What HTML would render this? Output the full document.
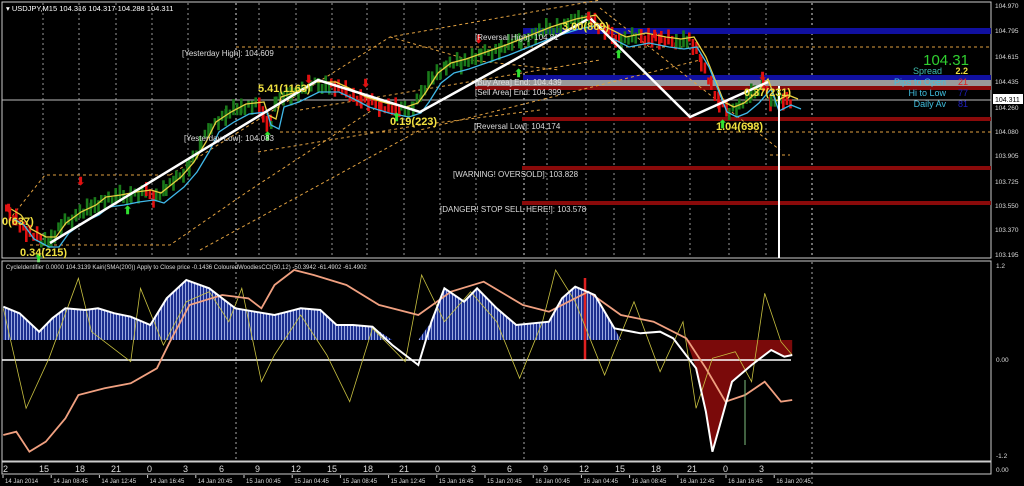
<!DOCTYPE html>
<html><head><meta charset="utf-8"><style>
html,body{margin:0;padding:0;background:#000;width:1024px;height:486px;overflow:hidden}
svg{display:block}
text{font-family:"Liberation Sans",sans-serif}
</style></head><body>
<svg id="s" width="1024" height="486" viewBox="0 0 1024 486">
<defs>
<pattern id="bl" width="3" height="10" patternUnits="userSpaceOnUse"><rect width="3" height="10" fill="#1c2f8f"/><rect x="2" width="1" height="10" fill="#9aa8e0"/></pattern>
</defs>
<rect width="1024" height="486" fill="#000"/>
<rect x="2" y="2" width="989" height="256" fill="none" stroke="#ccc" stroke-width="1"/>
<g id="grid" stroke="#aaa" stroke-dasharray="2,3" stroke-width="1"></g>
<rect x="523" y="28" width="468" height="6" fill="#1010a0"/>
<rect x="523" y="75" width="468" height="5" fill="#1010a0"/>
<rect x="475" y="80" width="516" height="6" fill="#9a9a9a"/>
<rect x="475" y="86" width="516" height="4" fill="#8a0a0a"/>
<line x1="2" y1="100" x2="991" y2="100" stroke="#bbb"/>
<rect x="522" y="117" width="469" height="4" fill="#8a0a0a"/>
<rect x="522" y="166" width="469" height="4" fill="#8a0a0a"/>
<rect x="522" y="201" width="469" height="4" fill="#8a0a0a"/>
<g stroke="#e0a040" stroke-dasharray="3,3" fill="none">
<line x1="236" y1="47" x2="991" y2="47"/><line x1="280" y1="132" x2="991" y2="132"/>
<polyline points="5,225 45,175 170,175"/><polyline points="30,245 170,245 250,190 380,105"/>
<polyline points="170,175 390,37 600,0"/><polyline points="300,110 600,60"/>
<polyline points="390,37 470,60 560,70"/><polyline points="200,250 420,130 700,60"/>
<polyline points="600,8 780,150"/><polyline points="258,152 420,125 540,110"/>
<line x1="770" y1="155" x2="790" y2="155"/>
</g>
<g id="candles"></g>
<polyline id="cy" fill="none" stroke="#e8d040" stroke-width="1.3"/>
<polyline id="cb" fill="none" stroke="#40b8e8" stroke-width="1.3"/>
<polyline points="50,243 318,80 350,90 420,112 590,18 690,117 768,82" fill="none" stroke="#fff" stroke-width="2.5"/>
<line x1="779" y1="86" x2="779" y2="258" stroke="#fff" stroke-width="2"/>
<g id="arr" font-size="11" font-weight="bold"></g>
<g font-size="8" fill="#ddd">
<text x="6" y="11" font-size="7.5" fill="#fff">▾ USDJPY,M15  104.316 104.317 104.288 104.311</text>
<text x="182" y="56">[Yesterday High]: 104.609</text>
<text x="184" y="141">[Yesterday Low]: 104.083</text>
<text x="475" y="40">[Reversal High]: 104.81</text>
<text x="475" y="85">[Buy Area] End: 104.439</text>
<text x="475" y="95">[Sell Area] End: 104.399</text>
<text x="474" y="129">[Reversal Low]: 104.174</text>
<text x="453" y="177">[WARNING! OVERSOLD]: 103.828</text>
<text x="440" y="212">[DANGER! STOP SELL HERE!]: 103.578</text>
</g>
<g font-size="11" font-weight="bold" fill="#f0e040">
<text x="2" y="225">0(637)</text><text x="20" y="256">0.34(215)</text>
<text x="258" y="92">5.41(1163)</text><text x="390" y="125">0.19(223)</text>
<text x="562" y="30">3.00(869)</text><text x="716" y="130">1.04(698)</text>
<text x="744" y="96">0.37(231)</text>
</g>
<g text-anchor="end">
<text x="969" y="65" font-size="15" fill="#30d030">104.31</text>
<text x="942" y="74" font-size="9" fill="#40c0b0">Spread</text><text x="968" y="74" font-size="9" fill="#f0e040" font-weight="bold">2.2</text>
<text x="946" y="85" font-size="9" fill="#40c0e0">Pips to Open</text><text x="968" y="85" font-size="9" fill="#e02020">21</text>
<text x="946" y="96" font-size="9" fill="#40c0e0">Hi to Low</text><text x="968" y="96" font-size="9" fill="#2020c0">77</text>
<text x="946" y="107" font-size="9" fill="#40c0e0">Daily Av</text><text x="968" y="107" font-size="9" fill="#2020c0">81</text>
</g>
<g font-size="6.5" fill="#ddd" id="pax"></g>
<rect x="993" y="94" width="30" height="10" fill="#fff"/><text x="995" y="102" font-size="7" fill="#000">104.311</text>
<rect x="2" y="261" width="989" height="200" fill="none" stroke="#ccc"/>
<line x1="236" y1="262" x2="236" y2="460" stroke="#aaa" stroke-dasharray="2,3"/>
<line x1="524" y1="262" x2="524" y2="460" stroke="#aaa" stroke-dasharray="2,3"/>
<line x1="812" y1="262" x2="812" y2="486" stroke="#aaa" stroke-dasharray="2,3"/>
<text x="6" y="269" font-size="6" fill="#ddd">CycleIdentifier 0.0000 104.3139  Kairi(SMA(200)) Apply to Close price -0.1436  ColouredWoodiesCCI(50,12) -50.3942 -61.4902 -61.4902</text>
<polygon id="hb" fill="url(#bl)"/>
<polygon id="hr" fill="#7a0a0a"/>
<line x1="585" y1="278" x2="585" y2="360" stroke="#e02020" stroke-width="2.5"/>
<line x1="2" y1="360" x2="791" y2="360" stroke="#fff" stroke-width="1.5"/>
<polyline id="iy" fill="none" stroke="#c8c040" stroke-width="0.8"/>
<polyline id="io" fill="none" stroke="#f0a080" stroke-width="1.8"/>
<polyline id="iw" fill="none" stroke="#fff" stroke-width="2"/>
<line x1="745" y1="380" x2="745" y2="445" stroke="#80c080" stroke-width="1"/>
<g font-size="6.5" fill="#ddd"><text x="996" y="268">1.2</text><text x="996" y="362">0.00</text><text x="996" y="458">-1.2</text><text x="996" y="472">0.00</text></g>
<rect x="2" y="462" width="989" height="12" fill="none" stroke="#ccc"/>
<g id="tax" font-size="9" fill="#ddd"></g>
<g id="dax" font-size="6" fill="#ddd"></g>
</svg>
<script>
var NS="http://www.w3.org/2000/svg";
function el(p,t,a,txt){var e=document.createElementNS(NS,t);for(var k in a)e.setAttribute(k,a[k]);if(txt)e.textContent=txt;document.getElementById(p).appendChild(e);return e;}
[43,79,116,152,188,236,259,296,332,367,404,440,476,524,547,586,614,644,690,729,766,812].forEach(function(x){el("grid","line",{x1:x,y1:3,x2:x,y2:257,stroke:(x==236||x==524||x==812)?"#ddd":"#999"});});
var P=[[5,212],[15,218],[25,232],[40,240],[50,240],[60,226],[75,215],[90,208],[100,200],[115,198],[130,195],[145,193],[155,196],[165,188],[175,180],[188,165],[200,145],[210,125],[225,115],[240,107],[258,105],[262,118],[270,122],[275,100],[290,95],[310,85],[330,85],[345,92],[360,100],[380,106],[400,110],[412,106],[420,95],[432,76],[445,66],[460,62],[480,55],[500,48],[520,40],[545,30],[570,22],[590,18],[600,30],[620,40],[640,36],[660,40],[675,42],[688,40],[700,60],[710,85],[718,105],[728,110],[738,106],[750,96],[762,82],[770,104],[782,98],[792,102]];
var pts=[];for(var i=0;i<P.length-1;i++){var a=P[i],b=P[i+1];for(var x=a[0];x<b[0];x+=3.6){var y=a[1]+(b[1]-a[1])*(x-a[0])/(b[0]-a[0]);pts.push([x,y,b[1]<=a[1]]);}}
pts.forEach(function(p,i){var h=7+((i*7)%11);var off=((i*13)%9)-4;el("candles","rect",{x:p[0],y:p[1]-h/2+off,width:2.6,height:h,fill:p[2]?"#1a7a1a":"#e01010"});});
document.getElementById("cy").setAttribute("points",P.map(function(p,i){return (p[0]+6)+","+(p[1]-3)}).join(" "));
document.getElementById("cb").setAttribute("points",P.map(function(p){return (p[0]+9)+","+(p[1]+7)}).join(" "));
[[8,212,"#e01010","⬇"],[80,185,"#e01010","⬇"],[308,83,"#e01010","⬇"],[365,87,"#e01010","⬇"],[478,43,"#e01010","⬇"],[588,20,"#e01010","⬇"],[654,38,"#e01010","⬇"],[762,80,"#e01010","⬇"],[38,262,"#30e030","⬆"],[127,214,"#30e030","⬆"],[267,140,"#30e030","⬆"],[396,121,"#30e030","⬆"],[518,77,"#30e030","⬆"],[618,58,"#30e030","⬆"],[722,128,"#30e030","⬆"]].forEach(function(a){el("arr","text",{x:a[0]-4,y:a[1],fill:a[2]},a[3]);});
[[104.970,8],[104.795,33],[104.615,59],[104.435,84],[104.260,110],[104.080,134],[103.905,158],[103.725,184],[103.550,208],[103.370,232],[103.195,257]].forEach(function(v){el("pax","text",{x:995,y:v[1]},v[0].toFixed(3));});
function cx(pl){return pl.map(function(p){return (p[0]/1.53).toFixed(1)+","+(p[1]/3+255).toFixed(1)}).join(" ");}
var W=[[5,155],[30,175],[60,230],[80,190],[100,160],[130,165],[150,160],[175,175],[200,185],[230,210],[255,130],[285,75],[320,100],[340,130],[360,160],[390,170],[420,180],[440,170],[460,160],[490,165],[515,210],[540,210],[570,215],[600,270],[620,300],[640,330],[660,200],[680,100],[710,140],[730,100],[760,160],[790,210],[840,200],[860,130],[880,95],[910,120],[940,220],[980,235],[1010,230],[1030,250],[1065,340],[1080,470],[1090,590],[1100,520],[1120,380],[1150,330],[1180,285],[1200,305],[1212,300]];
var O=[[5,540],[25,530],[45,590],[70,560],[100,490],[120,420],[160,400],[200,385],[240,340],[260,260],[290,150],[340,120],[380,130],[400,160],[420,90],[450,45],[480,60],[530,90],[580,150],[640,180],[690,110],[740,80],[800,150],[840,170],[900,110],[950,180],[1000,200],[1050,250],[1080,340],[1110,440],[1140,420],[1170,380],[1195,440],[1212,435]];
var Y=[[5,160],[40,460],[75,310],[120,70],[140,230],[200,320],[215,100],[250,270],[285,140],[320,110],[350,200],[370,100],[400,380],[420,300],[460,180],[500,300],[535,440],[570,220],[620,320],[645,60],[680,200],[720,110],[760,200],[795,370],[830,200],[850,45],[880,140],[925,360],[970,140],[1010,350],[1045,200],[1065,460],[1090,310],[1125,290],[1150,380],[1170,115],[1195,260],[1212,300]];
document.getElementById("iw").setAttribute("points",cx(W));
document.getElementById("io").setAttribute("points",cx(O));
document.getElementById("iy").setAttribute("points",cx(Y));
var hb=W.filter(function(p){return p[0]<=950}).map(function(p){return [p[0],Math.min(p[1],255)]});
document.getElementById("hb").setAttribute("points",cx([[5,255]].concat(hb,[[950,255]])));
var hr=W.filter(function(p){return p[0]>=1050}).map(function(p){return [p[0],Math.max(p[1],255)]});
document.getElementById("hr").setAttribute("points",cx([[1050,255]].concat(hr,[[1212,255]])));
var tl=["2","15","18","21","0","3","6","9","12","15","18","21","0","3","6","9","12","15","18","21","0","3"];
tl.forEach(function(t,i){el("tax","text",{x:(i==0?6:42+(i-1)*36)-3,y:472},t);});
var dl=["14 Jan 2014","14 Jan 08:45","14 Jan 12:45","14 Jan 16:45","14 Jan 20:45","15 Jan 00:45","15 Jan 04:45","15 Jan 08:45","15 Jan 12:45","15 Jan 16:45","15 Jan 20:45","16 Jan 00:45","16 Jan 04:45","16 Jan 08:45","16 Jan 12:45","16 Jan 16:45","16 Jan 20:45"];
dl.forEach(function(t,i){var x=3+i*48.2;el("dax","line",{x1:x,y1:475,x2:x,y2:478,stroke:"#ccc"});el("dax","text",{x:x+2,y:483},t);});
</script>
</body></html>
